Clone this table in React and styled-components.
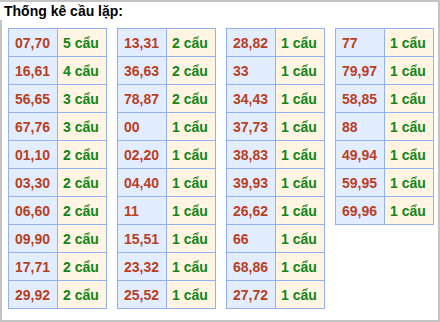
import React from "react"
import styled, { createGlobalStyle } from "styled-components"

const Global = createGlobalStyle`
  body {
    margin: 0;
    background: #fff;
    font-family: "Liberation Sans", Arial, sans-serif;
  }
`

const Box = styled.div`
  box-sizing: border-box;
  width: 440px;
  height: 322px;
  border: 2px solid #c4c4c4;
  padding: 0 0 0 6px;
`

const Title = styled.div`
  display: inline-block;
  background: #fff;
  margin: -2px 0 0 -8px;
  padding: 1px 6px 0 4px;
  height: 17px;
  font-size: 14px;
  font-weight: bold;
  line-height: 16px;
  color: #000;
`

const Tables = styled.div`
  display: flex;
  align-items: flex-start;
  gap: 10px;
  margin-top: 8px;
`

const Table = styled.table`
  border-collapse: collapse;
  width: 99px;
  table-layout: fixed;
`

const Td = styled.td`
  border: 1px solid #93b1ee;
  height: 27px;
  padding: 0 0 0 ${(p) => (p.$count ? 5 : 6)}px;
  font-size: 14px;
  font-weight: bold;
  white-space: nowrap;
  background: ${(p) => (p.$count ? "#fff5e2" : "#e2eeff")};
  color: ${(p) => (p.$count ? "#11861a" : "#b8401f")};
`

const columns = [
  [["07,70", 5], ["16,61", 4], ["56,65", 3], ["67,76", 3], ["01,10", 2], ["03,30", 2], ["06,60", 2], ["09,90", 2], ["17,71", 2], ["29,92", 2]],
  [["13,31", 2], ["36,63", 2], ["78,87", 2], ["00", 1], ["02,20", 1], ["04,40", 1], ["11", 1], ["15,51", 1], ["23,32", 1], ["25,52", 1]],
  [["28,82", 1], ["33", 1], ["34,43", 1], ["37,73", 1], ["38,83", 1], ["39,93", 1], ["26,62", 1], ["66", 1], ["68,86", 1], ["27,72", 1]],
  [["77", 1], ["79,97", 1], ["58,85", 1], ["88", 1], ["49,94", 1], ["59,95", 1], ["69,96", 1]],
]

const App = () => {
  return (
    <>
      <Global />
      <Box>
        <Title>Thống kê cầu lặp:</Title>
        <Tables>
          {columns.map((rows, i) => (
            <Table key={i}>
              <tbody>
                {rows.map(([pair, n]) => (
                  <tr key={pair}>
                    <Td>{pair}</Td>
                    <Td $count>{n} cẩu</Td>
                  </tr>
                ))}
              </tbody>
            </Table>
          ))}
        </Tables>
      </Box>
    </>
  )
}

export default App
